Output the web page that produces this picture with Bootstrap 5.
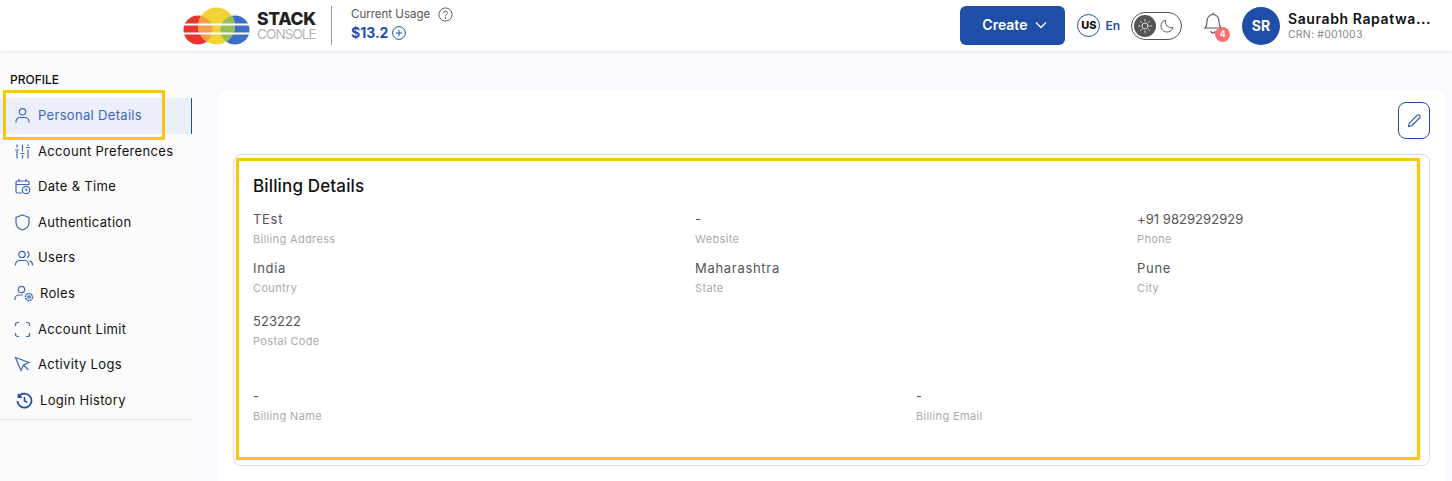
<!DOCTYPE html>
<html lang="en">
<head>
<meta charset="utf-8">
<title>Personal Details</title>
<link href="https://cdn.jsdelivr.net/npm/bootstrap@5.3.0/dist/css/bootstrap.min.css" rel="stylesheet">
<style>
html,body{height:481px;overflow:hidden}
body{font-family:Inter,"Open Sans",sans-serif;background:#f9fafe;color:#111;font-size:13px;position:relative}
.topbar{height:51px;background:#fff;box-shadow:0 1px 3px rgba(0,0,0,.1);position:relative;z-index:2;padding-left:183px;padding-right:12px}
.logo-mark{flex:none}
.logo-word{line-height:1;margin-left:7px;width:60px}
.logo-a{font-size:17.5px;font-weight:800;color:#222;letter-spacing:-.3px;display:block}
.logo-b{font-size:13.5px;color:#b4b4b4;display:block;margin-top:1px;letter-spacing:-.9px}
.vr-line{width:1px;height:39px;background:#999;margin:0 19px 0 14px}
.use-label{font-size:11.5px;color:#555;line-height:16px;margin-top:-2px}
.use-val{font-size:14px;font-weight:700;color:#1f4ea8;line-height:20px;margin-top:1px}
.make-btn{width:105px;height:39px;background:#1f4ea8;border:0;border-radius:6px;color:#fff;font-weight:600;font-size:14px;margin-right:12px;padding:0 0 2px 4px}
.us-mark{width:23px;height:23px;border:1.5px solid #1f4ea8;border-radius:50%;font-size:11px;font-weight:800;color:#111;margin-right:5px}
.en-mark{font-size:12px;font-weight:600;color:#1f4ea8;margin-right:11px}
.mode-pill{width:51px;height:28px;border:1.5px solid #555;border-radius:14px;padding:2px;margin-right:20px}
.mode-knob{width:22px;height:22px;border-radius:50%;background:#555}
.bell-wrap{width:28px;height:32px;margin-right:12px}
.bell-count{position:absolute;right:0;bottom:0;width:15px;height:15px;border-radius:50%;background:#f96f6f;color:#fff;font-size:8.5px;font-weight:700;line-height:15px;text-align:center}
.av{width:38px;height:38px;border-radius:50%;background:#1f4ea8;color:#fff;font-weight:700;font-size:14px;margin-right:8px}
.who{width:152px}
.who-name{font-size:14px;font-weight:600;color:#111;line-height:18px;white-space:nowrap;letter-spacing:.6px}
.who-crn{font-size:10.5px;color:#888;line-height:13px;letter-spacing:.2px}
.shell{height:430px}
.side{width:192px;background:#fbfbfb;height:430px;flex:none}
.side-title{font-size:12px;font-weight:500;padding:21px 0 0 10px;line-height:15px;height:47px;color:#111}
.side-list{border-bottom:1px solid #e2e2e2;padding-bottom:1px}
.side-item{height:35.6px;padding-left:14px;font-size:13px;color:#111;white-space:nowrap;letter-spacing:.32px}
.side-item svg{flex:none;width:17px;height:17px;margin-right:7px}
.side-item.on{background:#ebeff9;color:#3f66b5;border-right:1.5px solid #1f4ea8}
.side-item.wide svg{width:20px;margin-right:4px}
.side-item.wide2 svg{width:20px;margin-right:6px}
.side-item.hist svg{margin-left:2px;margin-right:7px}
.main-wrap{padding:39px 7px 0 26px;min-width:0}
.sheet{background:#fff;border-radius:10px;padding:12px 15px 0 15px;height:400px}
.pen{width:32px;height:37px;border:1px solid #1f4ea8;border-radius:8px;background:#fff;padding:0}
.box{border:1px solid #ddd;border-radius:8px;margin-top:15px;height:312px;padding:20px 19px 0;overflow:hidden}
.box-title{font-size:17px;font-weight:500;line-height:22px;color:#111;margin-bottom:18px;letter-spacing:.15px}
.three{display:grid;grid-template-columns:repeat(3,442px);grid-template-rows:49px 53px 49px}
.three.tail{grid-template-columns:repeat(2,663px);grid-template-rows:49px;margin-top:26px}
.fld-v{font-size:13px;color:#555;line-height:17px;margin-top:-4px;letter-spacing:.7px}
.fld-v.digits{letter-spacing:.05px}
.fld-k{font-size:11px;color:#aaa;line-height:14px;margin-top:4px;letter-spacing:.35px}
.mark-line{position:absolute;border:3px solid #fcc60a;pointer-events:none;z-index:5}
.mark-a{left:3px;top:90px;width:162px;height:50px}
.mark-b{left:236px;top:158px;width:1184px;height:302px}
</style>
</head>
<body>
<header class="topbar d-flex align-items-center">
  <svg class="logo-mark" width="67" height="38" viewBox="0 0 67 38">
    <defs>
      <clipPath id="yc"><circle cx="33.500" cy="19" r="18.500"/></clipPath>
    </defs>
    <circle cx="15" cy="23" r="14.500" fill="#e8332f"/>
    <circle cx="52" cy="23" r="14.500" fill="#3d6fc8"/>
    <circle cx="33.500" cy="19" r="18.500" fill="#f3d233"/>
    <g clip-path="url(#yc)">
      <circle cx="15" cy="23" r="14.500" fill="#f2a04a"/>
      <circle cx="52" cy="23" r="14.500" fill="#93bf54"/>
    </g>
    <rect x="0" y="16.500" width="67" height="2" fill="#fff"/><rect x="0" y="25.500" width="67" height="2" fill="#fff"/>
  </svg>
  <div class="logo-word"><span class="logo-a">STACK</span><span class="logo-b">CONSOLE</span></div>
  <div class="vr-line"></div>
  <div>
    <div class="use-label d-flex align-items-center gap-2">Current Usage
      <svg width="15" height="15" viewBox="0 0 16 16" fill="none" stroke="#555"><circle cx="8" cy="8" r="7"/><path d="M6 6.200a2 2 0 1 1 3 1.700c-.7.4-1 .8-1 1.600M8 11.300v1" stroke-linecap="round"/></svg>
    </div>
    <div class="use-val d-flex align-items-center gap-1">$13.2
      <svg width="14" height="14" viewBox="0 0 14 14" fill="none" stroke="#1f4ea8"><circle cx="7" cy="7" r="6.400"/><path d="M7 3.800v6.400M3.800 7h6.400"/></svg>
    </div>
  </div>
  <div class="ms-auto d-flex align-items-center">
    <button class="make-btn d-flex align-items-center justify-content-center gap-2" type="button">Create
      <svg width="12" height="8" viewBox="0 0 12 8" fill="none" stroke="#fff" stroke-width="1.300"><path d="M1 1.500l5 5 5-5"/></svg>
    </button>
    <div class="us-mark d-flex align-items-center justify-content-center">US</div>
    <div class="en-mark">En</div>
    <div class="mode-pill d-flex align-items-center">
      <div class="mode-knob d-flex align-items-center justify-content-center">
        <svg width="16" height="16" viewBox="0 0 16 16" fill="none" stroke="#ddd" stroke-linecap="round"><circle cx="8" cy="8" r="3"/><path d="M8 1.500v1.600M8 12.900v1.600M1.500 8h1.600M12.900 8h1.600M3.400 3.400l1.100 1.100M11.500 11.500l1.100 1.100M3.400 12.600l1.100-1.100M11.500 4.500l1.100-1.100"/></svg>
      </div>
      <svg class="ms-1" width="15" height="15" viewBox="0 0 16 16" fill="none" stroke="#555"><path d="M13.800 10.200A6.500 6.500 0 0 1 5.800 2.200a6.500 6.500 0 1 0 8 8z"/></svg>
    </div>
    <div class="bell-wrap position-relative">
      <svg width="22" height="26" viewBox="0 0 22 26" fill="none" stroke="#555" stroke-width="1.100"><path d="M3 18c1.500-1.500 2-3 2-6.500C5 7.500 7.500 4.500 11 4.500s6 3 6 7c0 3.500.5 5 2 6.500z"/><path d="M11 2.500v2M9 21a2 2 0 0 0 4 0"/></svg>
      <span class="bell-count">4</span>
    </div>
    <div class="av d-flex align-items-center justify-content-center">SR</div>
    <div class="who">
      <div class="who-name">Saurabh Rapatwa...</div>
      <div class="who-crn">CRN: #001003</div>
    </div>
  </div>
</header>
<div class="shell d-flex">
  <aside class="side">
    <div class="side-title">PROFILE</div>
    <div class="side-list">
      <div class="side-item on d-flex align-items-center">
        <svg viewBox="0 0 17 17" fill="none" stroke="#3f66b5" stroke-width="1.200"><circle cx="8.500" cy="4.800" r="3.200"/><path d="M2 15.500v-1a4 4 0 0 1 4-4h5a4 4 0 0 1 4 4v1"/></svg>Personal Details</div>
      <div class="side-item d-flex align-items-center">
        <svg viewBox="0 0 17 17" fill="none" stroke="#3f66b5" stroke-width="1.200"><path d="M3 1.500v3M3 8v7.500M8.500 1.500v7M8.500 12v3.500M14 1.500v1.500M14 6.500v9M1 7h4M6.500 10.500h4M12 4.500h4"/></svg>Account Preferences</div>
      <div class="side-item d-flex align-items-center">
        <svg viewBox="0 0 17 17" fill="none" stroke="#3f66b5" stroke-width="1.200"><path d="M8 15H3.500A1.500 1.500 0 0 1 2 13.500v-9A1.500 1.500 0 0 1 3.500 3h10A1.500 1.500 0 0 1 15 4.500V7M2 6.500h13M5 1v3M12 1v3"/><circle cx="12" cy="12" r="3.700"/><path d="M12 10.200V12l1.200.8"/></svg>Date &amp; Time</div>
      <div class="side-item d-flex align-items-center">
        <svg viewBox="0 0 17 17" fill="none" stroke="#3f66b5" stroke-width="1.200"><path d="M8.500 1l6.500 2.500v5c0 3.800-2.800 6.300-6.500 7.500C4.800 14.800 2 12.300 2 8.500v-5z"/></svg>Authentication</div>
      <div class="side-item wide d-flex align-items-center">
        <svg viewBox="0 0 20 17" fill="none" stroke="#3f66b5" stroke-width="1.200"><circle cx="8" cy="4.500" r="3.200"/><path d="M1.500 15.500v-1a4 4 0 0 1 4-4h5a4 4 0 0 1 4 4v1M13 1.500a3.200 3.200 0 0 1 0 6M15.500 10.800a4 4 0 0 1 3 3.700v1"/></svg>Users</div>
      <div class="side-item wide2 d-flex align-items-center">
        <svg viewBox="0 0 20 17" fill="none" stroke="#3f66b5" stroke-width="1.200"><circle cx="7.500" cy="4.500" r="3.200"/><path d="M1 15v-1a4 4 0 0 1 4-4h4"/><circle cx="15" cy="12" r="3.500" stroke-dasharray="2 .6" stroke-width="1.500"/><circle cx="15" cy="12" r="1.200"/></svg>Roles</div>
      <div class="side-item d-flex align-items-center">
        <svg viewBox="0 0 17 17" fill="none" stroke="#3f66b5" stroke-width="1.200"><path d="M1.500 5V3.500a2 2 0 0 1 2-2H5M12 1.500h1.500a2 2 0 0 1 2 2V5M15.500 12v1.500a2 2 0 0 1-2 2H12M5 15.500H3.500a2 2 0 0 1-2-2V12"/></svg>Account Limit</div>
      <div class="side-item d-flex align-items-center">
        <svg viewBox="0 0 17 17" fill="none" stroke="#3f66b5" stroke-width="1.200"><path d="M1.500 1.500l13.500 5-5.500 2.500-2.500 5.500zM9.500 9l5 5"/></svg>Activity Logs</div>
      <div class="side-item hist d-flex align-items-center">
        <svg viewBox="0 0 17 17" fill="none" stroke="#24509f" stroke-width="1.700"><path d="M2.500 5A7 7 0 1 1 1.500 9M2.500 1.800V5.200H6M8.500 5v3.800l2.700 1.600"/></svg>Login History</div>
    </div>
  </aside>
  <main class="main-wrap flex-grow-1">
    <div class="sheet">
      <div class="d-flex justify-content-end">
        <button class="pen d-flex align-items-center justify-content-center" type="button" aria-label="Edit">
          <svg width="15" height="15" viewBox="0 0 15 15" fill="none" stroke="#1f4ea8" stroke-width="1.100"><path d="M1.500 13.500l.8-3.300 8-8a1.400 1.400 0 0 1 2 0l.5.5a1.400 1.400 0 0 1 0 2l-8 8z"/></svg>
        </button>
      </div>
      <section class="box">
        <div class="box-title">Billing Details</div>
        <div class="three">
          <div><div class="fld-v">TEst</div><div class="fld-k">Billing Address</div></div>
          <div><div class="fld-v">-</div><div class="fld-k">Website</div></div>
          <div><div class="fld-v digits">+91 9829292929</div><div class="fld-k">Phone</div></div>
          <div><div class="fld-v">India</div><div class="fld-k">Country</div></div>
          <div><div class="fld-v">Maharashtra</div><div class="fld-k">State</div></div>
          <div><div class="fld-v">Pune</div><div class="fld-k">City</div></div>
          <div><div class="fld-v digits">523222</div><div class="fld-k">Postal Code</div></div>
        </div>
        <div class="three tail">
          <div><div class="fld-v">-</div><div class="fld-k">Billing Name</div></div>
          <div><div class="fld-v">-</div><div class="fld-k">Billing Email</div></div>
        </div>
      </section>
    </div>
  </main>
</div>
<div class="mark-line mark-a"></div>
<div class="mark-line mark-b"></div>
<script src="https://cdn.jsdelivr.net/npm/bootstrap@5.3.0/dist/js/bootstrap.bundle.min.js"></script>
</body>
</html>
